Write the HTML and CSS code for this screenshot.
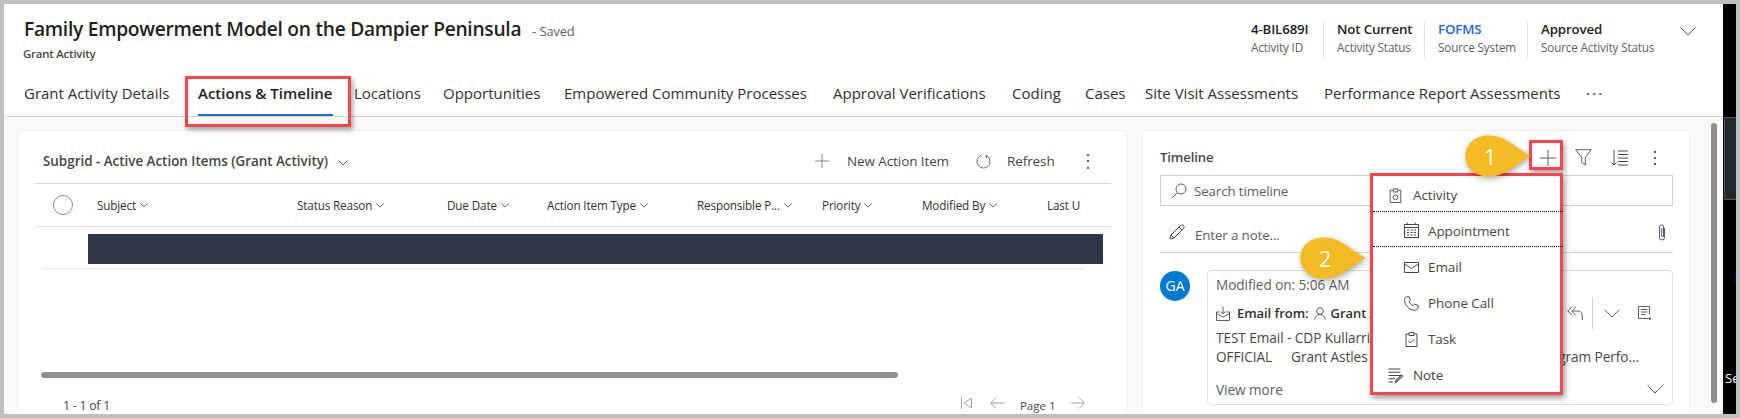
FILE: index.html
```html
<!DOCTYPE html>
<html lang="en">
<head>
<meta charset="utf-8">
<title>Grant Activity</title>
<link rel="stylesheet" href="styles.css">
</head>
<body>
<div class="frame">
  <main class="app">
    <header class="head">
      <div class="head-top">
        <div class="title-block">
          <div class="title-line"><h1 class="title">Family Empowerment Model on the Dampier Peninsula</h1><span class="saved">- Saved</span></div>
          <div class="entity">Grant Activity</div>
        </div>
        <div class="fields">
          <div class="field f1"><b>4-BIL689I</b><span>Activity ID</span></div>
          <div class="field f2"><b>Not Current</b><span>Activity Status</span></div>
          <div class="field f3"><b class="link">FOFMS</b><span>Source System</span></div>
          <div class="field f4"><b>Approved</b><span>Source Activity Status</span></div>
          <svg class="ic head-chev" viewBox="0 0 16 9"><path d="M.5.5 8 8l7.500-7.500"/></svg>
        </div>
      </div>
      <nav class="tabs">
        <span class="tab">Grant Activity Details</span>
        <span class="tab active">Actions &amp; Timeline</span>
        <span class="tab">Locations</span>
        <span class="tab">Opportunities</span>
        <span class="tab">Empowered Community Processes</span>
        <span class="tab">Approval Verifications</span>
        <span class="tab">Coding</span>
        <span class="tab">Cases</span>
        <span class="tab">Site Visit Assessments</span>
        <span class="tab">Performance Report Assessments</span>
        <span class="tab more">···</span>
      </nav>
    </header>
    <div class="content">
      <section class="card grid-card">
        <div class="toolbar">
          <span class="grid-name">Subgrid - Active Action Items (Grant Activity)</span>
          <svg class="ic name-chev" viewBox="0 0 10 6"><path d="M.5.5 5 5 9.500.5"/></svg>
          <span class="tools">
            <svg class="ic plus-g" viewBox="0 0 14 14"><path d="M7 0v14M0 7h14"/></svg>
            <span class="tool-t new">New Action Item</span>
            <svg class="ic refresh" viewBox="0 0 16 16"><path d="M5.500 1.500A7 7 0 1 0 10.500 1.500M10.500 1.500 11.500 4.500M5.500 1.500 6.500.5"/></svg>
            <span class="tool-t ref">Refresh</span>
            <span class="vdots g"><i></i><i></i><i></i></span>
          </span>
        </div>
        <div class="columns">
          <span class="col-check"><i class="circle"></i></span>
          <span class="col">Subject<svg class="ic sort" viewBox="0 0 8 5"><path d="M.5.500 4 4 7.500.5"/></svg></span>
          <span class="col">Status Reason<svg class="ic sort" viewBox="0 0 8 5"><path d="M.5.500 4 4 7.500.5"/></svg></span>
          <span class="col">Due Date<svg class="ic sort" viewBox="0 0 8 5"><path d="M.5.500 4 4 7.500.5"/></svg></span>
          <span class="col">Action Item Type<svg class="ic sort" viewBox="0 0 8 5"><path d="M.5.500 4 4 7.500.5"/></svg></span>
          <span class="col">Responsible P...<svg class="ic sort" viewBox="0 0 8 5"><path d="M.5.500 4 4 7.500.5"/></svg></span>
          <span class="col">Priority<svg class="ic sort" viewBox="0 0 8 5"><path d="M.5.500 4 4 7.500.5"/></svg></span>
          <span class="col">Modified By<svg class="ic sort" viewBox="0 0 8 5"><path d="M.5.500 4 4 7.500.5"/></svg></span>
          <span class="col">Last U</span>
        </div>
        <div class="redacted"></div>
        <div class="row-line"><i></i><i></i><i></i><i></i><i></i><i></i><i></i><i></i><i></i></div>
        <div class="hscroll"></div>
        <div class="pager">
          <span class="count">1 - 1 of 1</span>
          <span class="pages">
            <svg class="ic pg-first" viewBox="0 0 11 12"><path d="M.5 0v12M10.500 1 3 6l7.500 5z"/></svg>
            <svg class="ic pg-arrow" viewBox="0 0 14 12"><path d="M6 .5.700 6 6 11.500M1 6h13"/></svg>
            <span class="page-no">Page 1</span>
            <svg class="ic pg-arrow" viewBox="0 0 14 12"><path d="M8 .5 13.300 6 8 11.500M13 6H0"/></svg>
          </span>
        </div>
      </section>
      <section class="card tl-card">
        <div class="tl-head">
          <span class="tl-title">Timeline</span>
          <span class="tl-tools">
            <svg class="ic tl-plus" viewBox="0 0 16 16"><path d="M8 0v16M0 8h16"/></svg>
            <svg class="ic tl-filter" viewBox="0 0 17 17"><path d="M.7.700h15.600L10.300 8.500V16L6.700 13.500v-5z"/></svg>
            <svg class="ic tl-sort" viewBox="0 0 17 16"><path d="M7 1h10M7 4.500h10M7 8h10M7 11.500h10M7 15h10M3 0v15M.5 12.500 3 15l2.500-2.500"/></svg>
            <span class="vdots t"><i></i><i></i><i></i></span>
          </span>
        </div>
        <div class="search">
          <svg class="ic s-ic" viewBox="0 0 16 16"><circle cx="10" cy="6" r="5"/><path d="M6.500 9.500 .8 15.200"/></svg>
          <span>Search timeline</span>
        </div>
        <div class="note-row">
          <svg class="ic pencil" viewBox="0 0 16 16"><path d="M1 15l1-4L11.500 1.500a1.700 1.700 0 0 1 3 3L5 14zM2 11l3 3M10 3l3 3"/></svg>
          <span class="note-t">Enter a note...</span>
          <svg class="ic clip" viewBox="0 0 8 17"><path d="M6.500 4v9.500a2.500 2.500 0 0 1-5 0V3a2 2 0 0 1 4 0v9a.9.9 0 0 1-1.800 0V4"/></svg>
        </div>
        <div class="entry">
          <span class="avatar">GA</span>
          <article class="post">
            <div class="mod">Modified on: 5:06 AM</div>
            <div class="post-head">
              <svg class="ic mail-in" viewBox="0 0 14 15"><path d="M3.500 6H.5v8.500h13V6h-3M.5 7.500 7 11l6.500-3.500M7 .5v7M4.500 5.500 7 8l2.500-2.500"/></svg>
              <b class="from">Email from:</b>
              <svg class="ic person" viewBox="0 0 12 13"><circle cx="6" cy="4" r="3.300"/><path d="M.7 12.500c.5-3 2.500-5 5.300-5s4.800 2 5.300 5"/></svg>
              <b class="sender">Grant Astles</b>
              <span class="post-tools">
                <svg class="ic reply" viewBox="0 0 16 15"><path d="M5 .7.8 5 5 9.300M9 .7 4.800 5 9 9.300M5 5h6c2.500 0 4.300 2 4.300 4.500V14"/></svg>
                <i class="vsep"></i>
                <svg class="ic p-chev" viewBox="0 0 16 9"><path d="M.5.5 8 8l7.500-7.500"/></svg>
                <svg class="ic p-note" viewBox="0 0 13 14"><path d="M11.500 8V.5H.5v12h8M3 3.500h6.500M3 6h6.500M3 8.500h4M8.500 12.500h4M11 10.500l2 2-2 1.500"/></svg>
              </span>
            </div>
            <div class="body-line">TEST Email - CDP Kullarri Grant Opportunity</div>
            <div class="body-line spread"><span class="official">OFFICIAL</span><span class="astles">Grant Astles</span><span class="tail">Program Perfo...</span></div>
            <div class="post-foot"><span>View more</span><svg class="ic f-chev" viewBox="0 0 16 9"><path d="M.5.5 8 8l7.500-7.500"/></svg></div>
          </article>
        </div>
      </section>
      <div class="vscroll"></div>
    </div>
  </main>
  <aside class="strip">
    <div class="strip-panel"></div>
    <i class="strip-blue"></i>
    <span class="strip-text">Se</span>
  </aside>

  <div class="mark tab-mark"></div>
  <div class="mark plus-mark"></div>
  <div class="menu">
    <div class="mi top"><svg class="ic m-ic" viewBox="0 0 14 17"><path d="M4 2.500H1v14h12v-14h-3M4.500 1h5v3.500h-5z"/><circle cx="7" cy="10.500" r="2.700"/></svg><span>Activity</span></div>
    <div class="mi sub focus"><svg class="ic m-ic" viewBox="0 0 15 15"><path d="M.5 1.500h14v13H.5zM.5 4.500h14M3.500 0v2M11.500 0v2M3 7h2M6.500 7h2M10 7h2M3 9.500h2M6.500 9.500h2M10 9.500h2M3 12h2M6.500 12h2M10 12h2"/></svg><span>Appointment</span></div>
    <div class="mi sub"><svg class="ic m-ic" viewBox="0 0 15 11"><path d="M.5.5h14v10H.5zM.5 2 7.500 6.500 14.500 2"/></svg><span>Email</span></div>
    <div class="mi sub"><svg class="ic m-ic" viewBox="0 0 15 15"><path d="M3 .8 5 .6l1.500 3.200-1.500 1.500c.6 2 2.300 3.700 4.300 4.300l1.500-1.500 3.500 1.500-.2 2.200c-.3 1.500-1.500 2.500-3 2.400C5.500 14.500.6 9.500.6 3.800.5 2.300 1.500 1.100 3 .8z"/></svg><span>Phone Call</span></div>
    <div class="mi sub"><svg class="ic m-ic" viewBox="0 0 12 15"><path d="M3.500 2H.5v12.500h11V2h-3M3.500.7h5V3.500h-5zM3 9l2 2 4-4"/></svg><span>Task</span></div>
    <div class="mi top"><svg class="ic m-ic" viewBox="0 0 14 14"><path d="M.5 1h11M.5 4h11M.5 7h11M.5 10h6M.5 13h4M7 13.500l.5-2 5-5 1 1-5 5z"/></svg><span>Note</span></div>
  </div>
  <div class="callout c1"><svg viewBox="0 0 66 42"><path d="M65.500 21C52 14 41 .5 24 .5 9 .5 .5 10 .5 21S9 41.500 24 41.500C41 41.500 52 28 65.500 21z"/></svg><span>1</span></div>
  <div class="callout c2"><svg viewBox="0 0 66 42"><path d="M65.500 21C52 14 41 .5 24 .5 9 .5 .5 10 .5 21S9 41.500 24 41.500C41 41.500 52 28 65.500 21z"/></svg><span>2</span></div>
</div>
</body>
</html>
```

FILE: styles.css
```css
* { box-sizing: border-box; }
html, body { margin: 0; height: 100%; }
body { font-family: "Open Sans", "Noto Sans", sans-serif; color: #323130; overflow: hidden; background: #bfbfbf; }
h1 { margin: 0; }
.frame { position: relative; width: 1740px; height: 418px; border: 4px solid #bfbfbf; display: flex; overflow: hidden; background: #000; }
.app { width: 1719px; flex: none; display: flex; flex-direction: column; background: #faf9f8; }
.ic { display: block; flex: none; fill: none; stroke: currentColor; stroke-width: 1; }

/* header */
.head { height: 113px; flex: none; background: #fff; border-bottom: 1px solid #d8d6d4; }
.head-top { height: 68px; display: flex; justify-content: space-between; padding: 0 0 0 20px; }
.title-line { display: flex; align-items: baseline; margin-top: 11px; height: 28px; }
.title { font-size: 19.200px; font-weight: 600; color: #201f1e; line-height: 28px; letter-spacing: -.27px; }
.saved { font-size: 12.800px; color: #605e5c; margin-left: 11px; letter-spacing: -.1px; }
.entity { font-size: 11.400px; font-weight: 600; color: #484644; margin-top: 2px; line-height: 18px; letter-spacing: -.2px; margin-left: -1px; }
.fields { display: flex; align-items: flex-start; padding-top: 17px; }
.field { height: 38px; display: flex; flex-direction: column; border-right: 1px solid #e1dfdd; }
.field b { font-size: 13.300px; font-weight: 600; color: #201f1e; line-height: 17px; letter-spacing: -.15px; white-space: nowrap; }
.field span { font-size: 11.700px; color: #605e5c; line-height: 17px; margin-top: 1px; letter-spacing: -.15px; white-space: nowrap; }
.field .link { color: #2266e3; }
.f1 { width: 73px; }
.f2 { width: 101px; padding-left: 13px; }
.f3 { width: 103px; padding-left: 13px; }
.f4 { width: 152px; padding-left: 13px; border-right: 0; }
.head-chev { width: 16px; height: 9px; margin: 6px 27px 0 0; color: #605e5c; }

.tabs { height: 44px; display: grid; grid-template-columns: 174px 156px 89px 121px 269px 179px 73px 60px 179px 262px 40px; padding-left: 20px; }
.tab { font-size: 15px; line-height: 42px; color: #323130; white-space: nowrap; letter-spacing: 0; position: relative; }
.tab.active { font-weight: 600; color: #201f1e; letter-spacing: 0; }
.tab.active::after { content: ""; position: absolute; left: 0; width: 135px; bottom: 0; height: 2px; background: #2266e3; }
.tab.more { color: #605e5c; letter-spacing: 2px; font-weight: 600; }

/* content */
.content { flex: 1; display: flex; padding: 14px 0 0 14px; min-height: 0; }
.card { background: #fff; border-radius: 4px 4px 0 0; box-shadow: 0 0 2px rgba(0,0,0,.12); flex: none; }
.grid-card { width: 1109px; padding: 0 16px 0 17px; display: flex; flex-direction: column; }
.toolbar { height: 53px; flex: none; display: flex; align-items: center; padding: 8px 0 0 8px; border-bottom: 1px solid #d8d6d4; }
.grid-name { font-size: 13.400px; font-weight: 600; color: #484644; letter-spacing: 0; white-space: nowrap; }
.name-chev { width: 10px; height: 6px; margin: 3px 0 0 10px; color: #605e5c; }
.tools { margin-left: auto; display: flex; align-items: center; color: #484644; }
.plus-g { width: 14px; height: 14px; color: #8a8886; }
.tool-t { font-size: 13.500px; letter-spacing: -.1px; white-space: nowrap; }
.new { margin-left: 18px; width: 129px; }
.refresh { width: 15px; height: 15px; color: #605e5c; }
.ref { margin-left: 16px; width: 80px; }
.vdots { display: flex; flex-direction: column; justify-content: space-between; width: 2px; height: 15px; }
.vdots i { width: 2px; height: 2px; background: #605e5c; }
.vdots.g { margin-right: 22px; }

.columns { height: 43px; flex: none; display: grid; grid-template-columns: 62px 200px 150px 100px 150px 125px 100px 125px 64px; align-items: center; border-bottom: 1px solid #e1dfdd; }
.col-check { padding-left: 18px; }
.circle { display: block; width: 20px; height: 20px; border: 1px solid #8a8886; border-radius: 50%; }
.col { display: flex; align-items: center; font-size: 11.700px; color: #323130; white-space: nowrap; overflow: hidden; letter-spacing: -.14px; font-weight: 500; }
.sort { width: 8px; height: 5px; margin-left: 4px; color: #605e5c; }
.redacted { height: 30px; flex: none; margin: 7px 8px 0 53px; background: #2d3748; }
.row-line { flex: none; display: grid; grid-template-columns: 42px 200px 150px 100px 150px 124px 99px 118px 51px; column-gap: 1px; margin: 4px 0 0 7px; height: 1px; }
.row-line i { background: #e3e1df; }
.hscroll { flex: none; width: 857px; height: 6px; margin: 103px 0 0 6px; border-radius: 3px; background: #8e8e8e; }
.pager { flex: none; display: flex; align-items: center; height: 22px; margin-top: 16px; padding-left: 28px; }
.count { font-size: 12.200px; color: #484644; letter-spacing: -.2px; white-space: nowrap; }
.pages { display: flex; align-items: center; margin-left: 851px; color: #a19f9d; }
.pg-first { width: 11px; height: 12px; margin-top: -4px; }
.pg-arrow { width: 14px; height: 12px; margin-top: -4px; }
.pg-first + .pg-arrow { margin-left: 18px; }
.page-no { font-size: 11.500px; color: #484644; margin-top: 1px; padding: 0 16px; width: 67px; white-space: nowrap; }

/* timeline */
.tl-card { width: 546px; margin-left: 16px; padding: 0 16px 0 17px; }
.tl-head { height: 44px; display: flex; align-items: flex-start; }
.tl-title { font-size: 13.200px; font-weight: 600; color: #484644; line-height: 20px; margin-top: 16px; letter-spacing: -.15px; }
.tl-tools { margin-left: auto; display: flex; align-items: center; margin-top: 18px; color: #484644; }
.tl-plus { width: 16px; height: 16px; color: #605e5c; }
.tl-filter { width: 17px; height: 17px; margin-left: 19px; color: #605e5c; }
.tl-sort { width: 17px; height: 16px; margin-left: 19px; }
.vdots.t { margin: 0 17px 0 26px; height: 14px; }
.search { height: 31px; border: 1px solid #d2d0ce; display: flex; align-items: center; padding-left: 10px; font-size: 13.400px; color: #605e5c; letter-spacing: -.15px; }
.s-ic { width: 16px; height: 16px; margin-right: 7px; }
.note-row { height: 47px; display: flex; align-items: center; border-bottom: 1px solid #d8d6d4; padding: 12px 0 0 9px; font-size: 13.400px; color: #605e5c; letter-spacing: -.15px; }
.pencil { width: 16px; height: 16px; margin-top: -6px; color: #484644; }
.note-t { margin-left: 10px; }
.clip { width: 8px; height: 17px; margin: -6px 7px 0 auto; color: #5c5470; }
.entry { display: flex; margin-top: 17px; }
.avatar { width: 30px; height: 30px; border-radius: 50%; background: #0078d4; color: #fff; font-size: 14px; line-height: 30px; text-align: center; flex: none; margin-top: 1px; }
.post { width: 466px; height: 135px; margin-left: 17px; border: 1px solid #e1dfdd; border-radius: 4px; padding: 0 0 0 8px; font-size: 13.600px; color: #484644; letter-spacing: -.05px; white-space: nowrap; }
.mod { height: 18px; line-height: 18px; margin-top: 5px; color: #605e5c; }
.post-head { display: flex; align-items: center; height: 32px; margin-top: 3px; }
.mail-in { width: 14px; height: 15px; color: #605e5c; }
.from { margin-left: 7px; font-weight: 600; font-size: 13px; color: #323130; }
.person { width: 12px; height: 13px; margin-left: 5px; color: #605e5c; }
.sender { margin-left: 5px; font-weight: 600; font-size: 13px; color: #323130; }
.post-tools { margin-left: auto; display: flex; align-items: center; color: #605e5c; }
.reply { width: 16px; height: 15px; }
.vsep { width: 1px; height: 32px; background: #d2d0ce; margin-left: 9px; }
.p-chev { width: 16px; height: 9px; margin-left: 11px; }
.p-note { width: 13px; height: 14px; margin: 0 21px 0 18px; }
.body-line { height: 19px; line-height: 19px; }
.post-head + .body-line { margin-top: -1px; }
.spread { display: flex; padding-right: 33px; }
.astles { margin-left: 19px; }
.tail { margin-left: auto; }
.post-foot { display: flex; align-items: center; justify-content: space-between; padding-right: 9px; margin-top: 14px; color: #605e5c; height: 18px; }
.f-chev { color: #605e5c; width: 16px; height: 9px; }
.vscroll { width: 6px; height: 280px; flex: none; margin: -8px 0 0 22px; border-radius: 3px; background: #8e8e8e; }

/* right strip */
.strip { width: 13px; flex: none; display: flex; flex-direction: column; background: #000; overflow: hidden; padding-top: 113px; }
.strip-panel { width: 12px; height: 83px; margin-left: 1px; background: #202a30; border: 1px solid #4a5a60; border-right: 0; flex: none; }
.strip-blue { display: block; width: 1px; height: 10px; margin: 73px 0 0 12px; background: #10104a; flex: none; }
.strip-text { font-size: 13px; color: #fff; line-height: 18px; margin: 86px 0 0 2px; white-space: nowrap; }

/* overlays: annotations on top of the screenshot */
.mark { position: absolute; border: 3px solid #f8454c; box-shadow: 2px 3px 5px rgba(0,0,0,.35); }
.tab-mark { left: 181px; top: 72px; width: 166px; height: 51px; }
.plus-mark { left: 1525px; top: 136px; width: 34px; height: 30px; }
.menu { position: absolute; left: 1366px; top: 169px; width: 193px; height: 222px; background: #fff; border: 3px solid #f8454c; box-shadow: 2px 3px 6px rgba(0,0,0,.4); font-size: 13.500px; color: #484644; letter-spacing: -.1px; }
.mi { height: 36px; display: flex; align-items: center; padding-top: 2px; }
.mi.top { padding-left: 15px; }
.mi.sub { padding-left: 31px; }
.mi .m-ic { width: 15px; height: 15px; margin-right: 9px; color: #484644; }
.mi.top .m-ic { margin-right: 10px; }
.mi.focus { position: relative; height: 35px; }
.mi.focus::before { content: ""; position: absolute; left: 0; right: -3px; top: -1px; bottom: 0; border-top: 1px dotted #000; border-bottom: 1px dotted #000; }
.mi.focus + .mi { margin-top: 1px; }
.callout { position: absolute; width: 66px; height: 42px; color: #fff; font-size: 22px; filter: drop-shadow(1px 2px 3px rgba(0,0,0,.35)); }
.callout svg { display: block; width: 66px; height: 42px; fill: #f4bb22; }
.callout span { position: absolute; left: 0; width: 50px; top: 0; text-align: center; line-height: 42px; }
.c1 { left: 1461px; top: 131px; }
.c2 { left: 1296px; top: 233px; }
```
